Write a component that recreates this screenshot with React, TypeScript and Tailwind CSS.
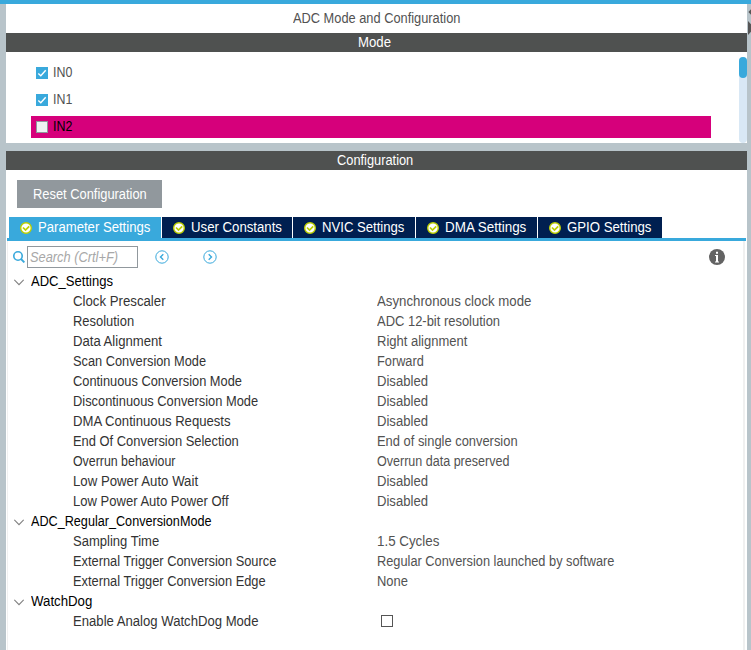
import React, { useLayoutEffect, useRef } from "react";

type Row = { label: string; labelWidth: number; value?: string; valueWidth?: number; checkbox?: boolean };
type Group = { title: string; titleWidth: number; rows: Row[] };

const groups: Group[] = [
  {
    title: "ADC_Settings",
    titleWidth: 82,
    rows: [
      { label: "Clock Prescaler", labelWidth: 92.5, value: "Asynchronous clock mode", valueWidth: 154 },
      { label: "Resolution", labelWidth: 61, value: "ADC 12-bit resolution", valueWidth: 123 },
      { label: "Data Alignment", labelWidth: 89, value: "Right alignment", valueWidth: 90 },
      { label: "Scan Conversion Mode", labelWidth: 133.5, value: "Forward", valueWidth: 46.5 },
      { label: "Continuous Conversion Mode", labelWidth: 168.5, value: "Disabled", valueWidth: 50.5 },
      { label: "Discontinuous Conversion Mode", labelWidth: 185.5, value: "Disabled", valueWidth: 50.5 },
      { label: "DMA Continuous Requests", labelWidth: 157.5, value: "Disabled", valueWidth: 50.5 },
      { label: "End Of Conversion Selection", labelWidth: 166, value: "End of single conversion", valueWidth: 141 },
      { label: "Overrun behaviour", labelWidth: 102.5, value: "Overrun data preserved", valueWidth: 132.5 },
      { label: "Low Power Auto Wait", labelWidth: 125.5, value: "Disabled", valueWidth: 50.5 },
      { label: "Low Power Auto Power Off", labelWidth: 155.5, value: "Disabled", valueWidth: 50.5 },
    ],
  },
  {
    title: "ADC_Regular_ConversionMode",
    titleWidth: 180.5,
    rows: [
      { label: "Sampling Time", labelWidth: 86.5, value: "1.5 Cycles", valueWidth: 62 },
      { label: "External Trigger Conversion Source", labelWidth: 203.5, value: "Regular Conversion launched by software", valueWidth: 237.5 },
      { label: "External Trigger Conversion Edge", labelWidth: 192.5, value: "None", valueWidth: 30.5 },
    ],
  },
  {
    title: "WatchDog",
    titleWidth: 61.5,
    rows: [{ label: "Enable Analog WatchDog Mode", labelWidth: 185.5, checkbox: true }],
  },
];

const tabs = [
  { label: "Parameter Settings", width: "w-[152px]", textWidth: 112.5, active: true },
  { label: "User Constants", width: "w-[130px]", textWidth: 90.5 },
  { label: "NVIC Settings", width: "w-[122px]", textWidth: 82.5 },
  { label: "DMA Settings", width: "w-[121px]", textWidth: 81.5 },
  { label: "GPIO Settings", width: "w-[124px]", textWidth: 84 },
];

// Condenses its text horizontally so that the line takes exactly `width` pixels.
function Fit({ width, children }: { width: number; children: string }) {
  const ref = useRef<HTMLSpanElement>(null);
  useLayoutEffect(() => {
    const el = ref.current;
    if (el) el.style.transform = `scaleX(${width / el.offsetWidth})`;
  }, [width, children]);
  return (
    <span className="inline-flex shrink-0" style={{ width }}>
      <span ref={ref} className="inline-block shrink-0 origin-left">
        {children}
      </span>
    </span>
  );
}

function TabCheck() {
  return (
    <svg className="mt-px h-3 w-3 shrink-0" viewBox="0 0 12 12">
      <circle cx="6" cy="6" r="5.3" fill="#fff" stroke="#bccf00" strokeWidth="1.4" />
      <path d="M3 5.5 5.5 8 9.2 4.3" fill="none" stroke="#bccf00" strokeWidth="1.7" />
    </svg>
  );
}

function ModeCheckbox({ checked }: { checked: boolean }) {
  if (!checked) return <span className="mt-[2px] h-3 w-3 border border-[#8f979c] bg-[#eff1f3]" />;
  return (
    <svg className="mt-[2px] h-3 w-3 bg-[#39a9dc]" viewBox="0 0 12 12">
      <path d="M2.3 6.5 4.8 8.8 9.7 3.2" fill="none" stroke="#fff" strokeWidth="1.4" />
    </svg>
  );
}

function Chevron() {
  return (
    <svg className="mt-[2px] h-[7px] w-[10px]" viewBox="0 0 10 7">
      <path d="M.3 .8 5 5.6 9.7 .8" fill="none" stroke="#808080" strokeWidth="1.2" />
    </svg>
  );
}

function NavCircle({ d }: { d: string }) {
  return (
    <svg className="h-[14px] w-[14px]" viewBox="0 0 14 14" fill="none" stroke="#39a9dc">
      <circle cx="7" cy="7" r="6.2" />
      <path d={d} strokeWidth="1.4" />
    </svg>
  );
}

function ModeRow({ label, checked, selected }: { label: string; checked: boolean; selected?: boolean }) {
  return (
    <div className={"flex h-[22px] w-[680px] items-center gap-[5px] pb-[2px] pl-[5px] " + (selected ? "bg-[#d6007b] text-black" : "")}>
      <ModeCheckbox checked={checked} />
      <Fit width={19.5}>{label}</Fit>
    </div>
  );
}

export default function App() {
  return (
    <div className="flex h-[650px] w-[751px] flex-col overflow-hidden bg-[#b8c4ca] font-['Liberation_Sans',Arial,sans-serif] text-[14px] leading-5 whitespace-nowrap text-[#525252]">
      <div className="h-1 shrink-0 bg-[#39a9dc]" />
      <div className="flex min-h-0 flex-1">
        <div className="ml-[6px] flex w-[741px] flex-col">
          <section className="h-[139px] shrink-0 bg-white">
            <h1 className="flex h-[29px] justify-center pt-[4px]">
              <Fit width={167.5}>ADC Mode and Configuration</Fit>
            </h1>
            <div className="flex h-[19px] justify-center bg-[#4f5150] pr-[4px] leading-[19px] text-white">
              <Fit width={33}>Mode</Fit>
            </div>
            <div className="flex h-[91px] justify-between">
              <div className="ml-[25px] flex flex-col gap-[5px] pt-[10px]">
                <ModeRow label="IN0" checked />
                <ModeRow label="IN1" checked />
                <ModeRow label="IN2" checked={false} selected />
              </div>
              <div className="mt-[5px] h-[86px] w-2 rounded-full bg-[#d9e8f5]">
                <div className="h-[21px] rounded-full bg-[#39a9dc]" />
              </div>
            </div>
          </section>

          <section className="mt-2 flex min-h-0 flex-1 flex-col bg-white">
            <div className="flex h-[19px] shrink-0 justify-center bg-[#4f5150] pr-[4px] leading-[19px] text-white">
              <Fit width={76}>Configuration</Fit>
            </div>
            <button className="mt-[10px] ml-[11px] flex h-[28px] w-[145px] shrink-0 items-center justify-center bg-[#91989d] text-white">
              <Fit width={114}>Reset Configuration</Fit>
            </button>
            <div className="mt-[9px] ml-[3px] flex h-[21px] shrink-0 gap-px">
              {tabs.map((t) => (
                <div key={t.label} className={"flex items-center gap-[6px] pb-px pl-[11px] text-white " + t.width + (t.active ? " bg-[#39a9dc]" : " bg-[#001f50]")}>
                  <TabCheck />
                  <Fit width={t.textWidth}>{t.label}</Fit>
                </div>
              ))}
            </div>
            <div className="ml-px h-[3px] w-[739px] shrink-0 bg-[#39a9dc]" />
            <div className="ml-px min-h-0 w-[738px] flex-1 border-x-2 border-l-[1px] border-[#f0f0f0]">
              <div className="flex h-[31px] items-center pl-[5px]">
                <svg className="h-3 w-3" viewBox="0 0 12 12" fill="none" stroke="#39a9dc">
                  <circle cx="5" cy="5" r="4.2" strokeWidth="1.6" />
                  <path d="M8 8 11.4 11.4" strokeWidth="1.9" />
                </svg>
                <div className="ml-[2px] h-[22px] w-[111px] border border-[#91989d] pl-[2px] leading-5 text-[#a8a8a8] italic">
                  <Fit width={88}>Search (Crtl+F)</Fit>
                </div>
                <div className="ml-[17px] flex gap-[34px]">
                  <NavCircle d="M8.3 4.3 5.5 7 8.3 9.7" />
                  <NavCircle d="M5.7 4.3 8.5 7 5.7 9.7" />
                </div>
                <svg className="mr-[18px] ml-auto h-4 w-4" viewBox="0 0 16 16">
                  <circle cx="8" cy="8" r="8" fill="#636363" />
                  <path d="M7 2.8h2v2H7zM6 6h3v6.5h1v1H6v-1h1V7H6z" fill="#fff" />
                </svg>
              </div>
              {groups.map((g) => (
                <div key={g.title}>
                  <div className="flex h-5 items-center gap-[7px] pb-[2px] pl-[6px] text-black">
                    <Chevron />
                    <Fit width={g.titleWidth}>{g.title}</Fit>
                  </div>
                  {g.rows.map((r) => (
                    <div key={r.label} className="flex h-5 items-center pb-[2px] pl-[65px]">
                      <div className="flex w-[304px] text-[#333]">
                        <Fit width={r.labelWidth}>{r.label}</Fit>
                      </div>
                      {r.checkbox && <span className="ml-1 h-3 w-3 border border-[#555]" />}
                      {r.value && r.valueWidth && <Fit width={r.valueWidth}>{r.value}</Fit>}
                    </div>
                  ))}
                </div>
              ))}
            </div>
          </section>
        </div>
        <svg className="mt-[4px] ml-px h-[28px] w-[3px]" viewBox="0 0 3 28" fill="#555">
          <path d="M3 1.3v5.4L.4 4zM0 13l3 3.3v7.4L0 27z" />
        </svg>
      </div>
    </div>
  );
}
